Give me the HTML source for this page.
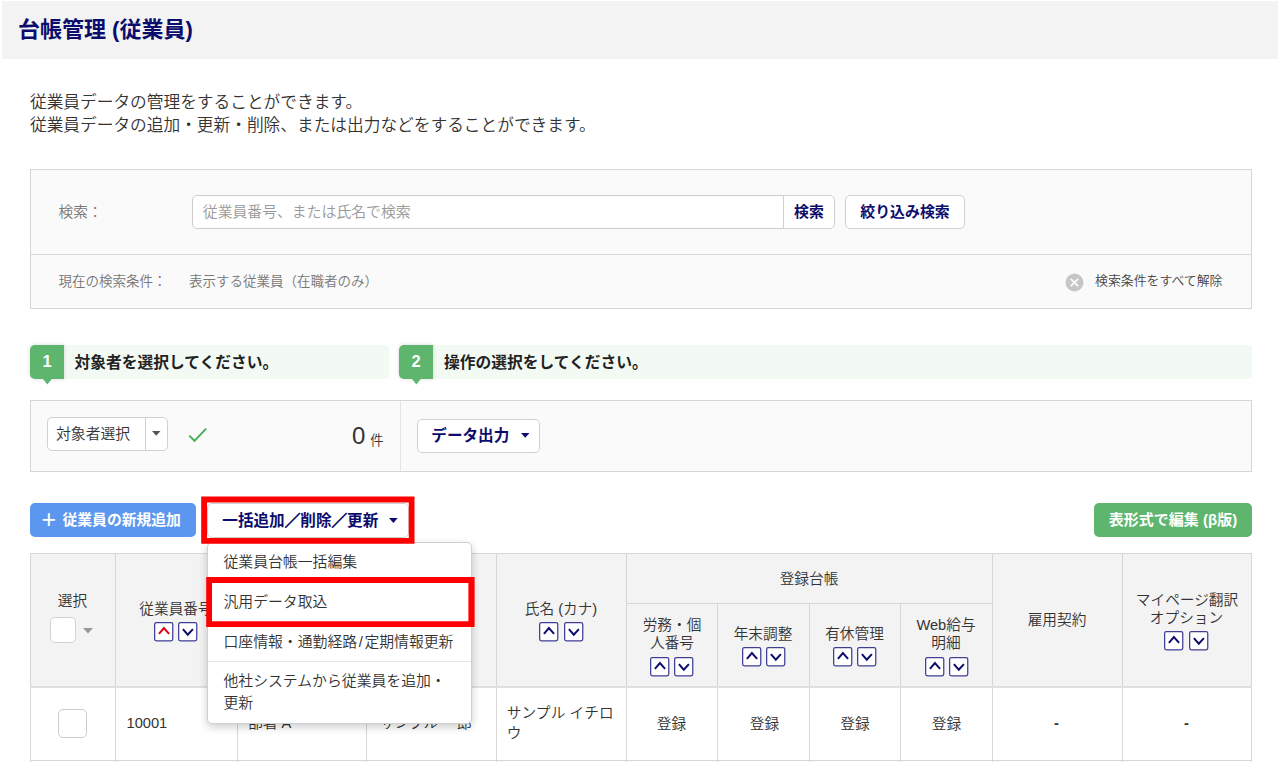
<!DOCTYPE html>
<html lang="ja">
<head>
<meta charset="utf-8">
<title>台帳管理 (従業員)</title>
<style>
*{box-sizing:border-box;margin:0;padding:0}
html,body{width:1280px;height:762px;overflow:hidden;background:#fff}
body{position:relative;font-family:"Liberation Sans","Noto Sans CJK JP",sans-serif;color:#333;font-size:14.67px;font-weight:350}
.abs{position:absolute;white-space:nowrap}
.hdr{left:2px;top:1px;width:1276px;height:58px;background:#f3f3f3}
.title{left:18px;top:15px;font-size:22px;font-weight:bold;color:#0c0c6c;line-height:30px}
.desc{left:30px;font-size:16.7px;color:#333;line-height:24px}
.sbox{left:30px;top:169px;width:1222px;height:140px;background:#fafafa;border:1px solid #d6d6d6}
.sdiv{left:31px;top:254px;width:1220px;height:1px;background:#d9d9d9}
.lbl{font-size:14.67px;color:#777}
.small{font-size:13.5px;color:#777}
.input{left:192px;top:195px;width:592px;height:34px;background:#fff;border:1px solid #ccc;border-radius:5px 0 0 5px;font-size:14.85px;color:#999;line-height:32px;padding-left:9.8px}
.btnw{background:#fff;border:1px solid #d0d0d0;border-radius:5px;font-weight:bold;color:#0c0c6c;font-size:14.9px;text-align:center}
.step{height:34px;background:#f3faf3;border-radius:4px}
.num{width:34px;height:34px;background:#5eb56e;border-radius:5px 0 0 5px;color:#fff;font-weight:bold;font-size:16.5px;text-align:center;line-height:32px;box-shadow:0 0 4px rgba(0,0,0,.15)}
.tri{width:0;height:0;border-left:5px solid transparent;border-right:5px solid transparent;border-top:6px solid #5eb56e}
.steptxt{font-size:15.75px;font-weight:bold;color:#222;line-height:34px;margin-top:1px}
.panel{left:30px;top:400px;width:1222px;height:72px;background:#fafafa;border:1px solid #d6d6d6}
.c{position:absolute;white-space:nowrap;font-size:14.67px;color:#333;line-height:20px;margin-top:.6px;transform:translate(-50%,-50%)}
.l{position:absolute;white-space:nowrap;font-size:14.67px;color:#333;line-height:20px;margin-top:.6px;transform:translate(0,-50%)}
.vl{position:absolute;width:1px;background:#d6d6d6}
.hl{position:absolute;height:1px;background:#d6d6d6}
.dd{left:207px;top:542px;width:265px;height:182px;background:#fff;border:1px solid #d0d0d0;border-radius:5px;box-shadow:0 3px 9px rgba(0,0,0,.2)}
.ddi{left:223.5px;font-size:14.85px;color:#333;line-height:22px}
.red{border:6px solid #fe0000}
.n{font-weight:400}
.sl{-webkit-text-stroke:.7px #0c0c6c}
.cb{position:absolute;background:#fff;border:1px solid #ccc;border-radius:5px}
</style>
</head>
<body>
<div class="abs hdr"></div>
<div class="abs title">台帳管理 (従業員)</div>
<div class="abs desc" style="top:90.5px">従業員データの管理をすることができます。</div>
<div class="abs desc" style="top:114px">従業員データの追加・更新・削除、または出力などをすることができます。</div>
<div class="abs sbox"></div>
<div class="abs sdiv"></div>
<div class="abs lbl" style="left:58.5px;top:202px;line-height:20px">検索：</div>
<div class="abs input">従業員番号、または氏名で検索</div>
<div class="abs btnw" style="left:783px;top:195px;width:52px;height:34px;line-height:32px;border-radius:0 5px 5px 0">検索</div>
<div class="abs btnw" style="left:845px;top:195px;width:120px;height:34px;line-height:32px">絞り込み検索</div>
<div class="abs small" style="left:58.5px;top:273px;line-height:18px">現在の検索条件：</div>
<div class="abs small" style="left:189px;top:273px;line-height:18px">表示する従業員（在職者のみ）</div>
<svg class="abs" style="left:1065px;top:272.5px" width="19" height="19" viewBox="0 0 19 19"><circle cx="9.5" cy="9.5" r="9" fill="#c6c6c6"/><path d="M6.3 6.3l6.4 6.4M12.7 6.3l-6.4 6.4" stroke="#fff" stroke-width="1.7" stroke-linecap="round"/></svg>
<div class="abs small" style="left:1095px;top:272px;line-height:18px;color:#444;font-size:12.9px">検索条件をすべて解除</div>
<div class="abs step" style="left:30px;top:345px;width:359px"></div>
<div class="abs num" style="left:30px;top:345px">1</div>
<svg class="abs" style="left:42.7px;top:379px" width="12" height="8" viewBox="0 0 12 8"><path d="M0 0h8.7l-4.35 5.6z" fill="#5eb56e"/></svg>
<div class="abs steptxt" style="left:74.5px;top:345px">対象者を選択してください。</div>
<div class="abs step" style="left:400px;top:345px;width:852px"></div>
<div class="abs num" style="left:399px;top:345px">2</div>
<svg class="abs" style="left:411.8px;top:379px" width="12" height="8" viewBox="0 0 12 8"><path d="M0 0h8.7l-4.35 5.6z" fill="#5eb56e"/></svg>
<div class="abs steptxt" style="left:444px;top:345px">操作の選択をしてください。</div>
<div class="abs panel"></div>
<div class="abs" style="left:400px;top:401px;width:1px;height:70px;background:#e4e4e4"></div>
<div class="abs" style="left:47px;top:417px;width:121px;height:34px;background:#fff;border:1px solid #d0d0d0;border-radius:5px"></div>
<div class="abs" style="left:145px;top:418px;width:1px;height:32px;background:#d0d0d0"></div>
<div class="abs" style="left:56px;top:424px;font-size:14.85px;color:#333;line-height:20px">対象者選択</div>
<svg class="abs" style="left:151.5px;top:430.5px" width="12" height="8" viewBox="0 0 12 8"><path d="M0 0h8.5l-4.25 4.8z" fill="#555"/></svg>
<svg class="abs" style="left:186px;top:425px" width="24" height="20" viewBox="0 0 24 20"><path d="M3.2 10.6l5.3 5.2L20.1 3.6" fill="none" stroke="#42af52" stroke-width="1.9"/></svg>
<div class="abs" style="left:352px;top:419px;font-size:24px;color:#333;line-height:34px;font-weight:400">0</div>
<div class="abs" style="left:370.3px;top:430.5px;font-size:13.3px;color:#333;line-height:20px">件</div>
<div class="abs btnw" style="left:417px;top:419px;width:123px;height:34px;line-height:32px;text-align:left;padding-left:13.3px;font-size:15.6px">データ出力</div>
<svg class="abs" style="left:521.3px;top:432.8px" width="12" height="8" viewBox="0 0 12 8"><path d="M0 0h8.5l-4.25 4.7z" fill="#0c0c6c"/></svg>
<div class="abs" style="left:30px;top:503px;width:166px;height:34px;background:#5b97ee;border-radius:5px;color:#fff;font-weight:bold;font-size:14.8px;line-height:34px"><span style="position:absolute;left:11.6px;top:-1px;font-size:25px;font-weight:normal">+</span><span style="position:absolute;left:32.5px;top:0">従業員の新規追加</span></div>
<div class="abs btnw" style="left:207px;top:503px;width:202px;height:35px;line-height:33px;text-align:left;padding-left:14.3px;font-size:15.6px">一括追加<span class="sl">／</span>削除<span class="sl">／</span>更新</div>
<svg class="abs" style="left:389.25px;top:517.5px" width="12" height="8" viewBox="0 0 12 8"><path d="M0 0h8.75l-4.375 5z" fill="#0c0c6c"/></svg>
<div class="abs" style="left:1094px;top:503px;width:158px;height:34px;background:#5eb56e;border-radius:5px;color:#fff;font-weight:bold;font-size:15px;line-height:34px;text-align:center">表形式で編集 (β版)</div>
<div class="abs" style="left:30px;top:553px;width:1222px;height:134px;background:#f3f3f3"></div>
<div class="vl" style="left:30px;top:553px;height:209px"></div>
<div class="vl" style="left:115px;top:553px;height:209px"></div>
<div class="vl" style="left:237px;top:553px;height:209px"></div>
<div class="vl" style="left:366px;top:553px;height:209px"></div>
<div class="vl" style="left:496px;top:553px;height:209px"></div>
<div class="vl" style="left:626px;top:553px;height:209px"></div>
<div class="vl" style="left:717px;top:603px;height:159px"></div>
<div class="vl" style="left:809px;top:603px;height:159px"></div>
<div class="vl" style="left:900px;top:603px;height:159px"></div>
<div class="vl" style="left:992px;top:553px;height:209px"></div>
<div class="vl" style="left:1122px;top:553px;height:209px"></div>
<div class="vl" style="left:1251px;top:553px;height:209px"></div>
<div class="hl" style="left:30px;top:553px;width:1222px"></div>
<div class="hl" style="left:626px;top:603px;width:366px"></div>
<div class="hl" style="left:30px;top:686px;width:1222px;height:2px;background:linear-gradient(#dcdcdc,#e2e2e2)"></div>
<div class="hl" style="left:30px;top:760px;width:1222px"></div>
<div class="c" style="left:72.5px;top:600.2px">選択</div>
<div class="cb" style="left:50px;top:617px;width:26px;height:26px;border-color:#d2d2d2"></div>
<svg class="abs" style="left:83px;top:628.4px" width="12" height="8" viewBox="0 0 12 8"><path d="M0 0h10l-5 5.5z" fill="#999"/></svg>
<div class="c" style="left:176px;top:608px">従業員番号</div>
<svg class="abs" style="left:154.37px;top:621.57px" width="21" height="21" viewBox="0 0 21 21"><rect x=".65" y=".65" width="18.1" height="18.1" rx="1.7" fill="#fff" stroke="#3e3e94" stroke-width="1.25"/><path d="M4.9 11.8L9.9 6.1l5.2 5.7" fill="none" stroke="#e00012" stroke-width="2"/></svg><svg class="abs" style="left:178.37px;top:621.57px" width="21" height="21" viewBox="0 0 21 21"><rect x=".65" y=".65" width="18.1" height="18.1" rx="1.7" fill="#fff" stroke="#3e3e94" stroke-width="1.25"/><path d="M4.9 7.1l4.9 5.6 5.1-5.6" fill="none" stroke="#0c0c6c" stroke-width="2"/></svg>
<div class="c" style="left:302px;top:608px">所属</div>
<svg class="abs" style="left:279.97px;top:621.57px" width="21" height="21" viewBox="0 0 21 21"><rect x=".65" y=".65" width="18.1" height="18.1" rx="1.7" fill="#fff" stroke="#3e3e94" stroke-width="1.25"/><path d="M4.9 11.8L9.9 6.1l5.2 5.7" fill="none" stroke="#0c0c6c" stroke-width="2"/></svg><svg class="abs" style="left:304.37px;top:621.57px" width="21" height="21" viewBox="0 0 21 21"><rect x=".65" y=".65" width="18.1" height="18.1" rx="1.7" fill="#fff" stroke="#3e3e94" stroke-width="1.25"/><path d="M4.9 7.1l4.9 5.6 5.1-5.6" fill="none" stroke="#0c0c6c" stroke-width="2"/></svg>
<div class="c" style="left:431px;top:608px">氏名</div>
<svg class="abs" style="left:409.47px;top:621.57px" width="21" height="21" viewBox="0 0 21 21"><rect x=".65" y=".65" width="18.1" height="18.1" rx="1.7" fill="#fff" stroke="#3e3e94" stroke-width="1.25"/><path d="M4.9 11.8L9.9 6.1l5.2 5.7" fill="none" stroke="#0c0c6c" stroke-width="2"/></svg><svg class="abs" style="left:433.87px;top:621.57px" width="21" height="21" viewBox="0 0 21 21"><rect x=".65" y=".65" width="18.1" height="18.1" rx="1.7" fill="#fff" stroke="#3e3e94" stroke-width="1.25"/><path d="M4.9 7.1l4.9 5.6 5.1-5.6" fill="none" stroke="#0c0c6c" stroke-width="2"/></svg>
<div class="c" style="left:561px;top:608.5px">氏名 <span class="n">(</span>カナ<span class="n">)</span></div>
<svg class="abs" style="left:539.07px;top:621.57px" width="21" height="21" viewBox="0 0 21 21"><rect x=".65" y=".65" width="18.1" height="18.1" rx="1.7" fill="#fff" stroke="#3e3e94" stroke-width="1.25"/><path d="M4.9 11.8L9.9 6.1l5.2 5.7" fill="none" stroke="#0c0c6c" stroke-width="2"/></svg><svg class="abs" style="left:563.87px;top:621.57px" width="21" height="21" viewBox="0 0 21 21"><rect x=".65" y=".65" width="18.1" height="18.1" rx="1.7" fill="#fff" stroke="#3e3e94" stroke-width="1.25"/><path d="M4.9 7.1l4.9 5.6 5.1-5.6" fill="none" stroke="#0c0c6c" stroke-width="2"/></svg>
<div class="c" style="left:809px;top:578px">登録台帳</div>
<div class="c" style="left:672px;top:624px">労務・個</div>
<div class="c" style="left:672px;top:642.5px">人番号</div>
<svg class="abs" style="left:649.77px;top:656.77px" width="21" height="21" viewBox="0 0 21 21"><rect x=".65" y=".65" width="18.1" height="18.1" rx="1.7" fill="#fff" stroke="#3e3e94" stroke-width="1.25"/><path d="M4.9 11.8L9.9 6.1l5.2 5.7" fill="none" stroke="#0c0c6c" stroke-width="2"/></svg><svg class="abs" style="left:674.27px;top:656.77px" width="21" height="21" viewBox="0 0 21 21"><rect x=".65" y=".65" width="18.1" height="18.1" rx="1.7" fill="#fff" stroke="#3e3e94" stroke-width="1.25"/><path d="M4.9 7.1l4.9 5.6 5.1-5.6" fill="none" stroke="#0c0c6c" stroke-width="2"/></svg>
<div class="c" style="left:763px;top:633px">年末調整</div>
<svg class="abs" style="left:741.87px;top:646.87px" width="21" height="21" viewBox="0 0 21 21"><rect x=".65" y=".65" width="18.1" height="18.1" rx="1.7" fill="#fff" stroke="#3e3e94" stroke-width="1.25"/><path d="M4.9 11.8L9.9 6.1l5.2 5.7" fill="none" stroke="#0c0c6c" stroke-width="2"/></svg><svg class="abs" style="left:765.77px;top:646.87px" width="21" height="21" viewBox="0 0 21 21"><rect x=".65" y=".65" width="18.1" height="18.1" rx="1.7" fill="#fff" stroke="#3e3e94" stroke-width="1.25"/><path d="M4.9 7.1l4.9 5.6 5.1-5.6" fill="none" stroke="#0c0c6c" stroke-width="2"/></svg>
<div class="c" style="left:854.5px;top:633px">有休管理</div>
<svg class="abs" style="left:832.97px;top:646.87px" width="21" height="21" viewBox="0 0 21 21"><rect x=".65" y=".65" width="18.1" height="18.1" rx="1.7" fill="#fff" stroke="#3e3e94" stroke-width="1.25"/><path d="M4.9 11.8L9.9 6.1l5.2 5.7" fill="none" stroke="#0c0c6c" stroke-width="2"/></svg><svg class="abs" style="left:857.07px;top:646.87px" width="21" height="21" viewBox="0 0 21 21"><rect x=".65" y=".65" width="18.1" height="18.1" rx="1.7" fill="#fff" stroke="#3e3e94" stroke-width="1.25"/><path d="M4.9 7.1l4.9 5.6 5.1-5.6" fill="none" stroke="#0c0c6c" stroke-width="2"/></svg>
<div class="c" style="left:946px;top:624px"><span class="n">Web</span>給与</div>
<div class="c" style="left:946px;top:642.5px">明細</div>
<svg class="abs" style="left:924.77px;top:656.77px" width="21" height="21" viewBox="0 0 21 21"><rect x=".65" y=".65" width="18.1" height="18.1" rx="1.7" fill="#fff" stroke="#3e3e94" stroke-width="1.25"/><path d="M4.9 11.8L9.9 6.1l5.2 5.7" fill="none" stroke="#0c0c6c" stroke-width="2"/></svg><svg class="abs" style="left:948.67px;top:656.77px" width="21" height="21" viewBox="0 0 21 21"><rect x=".65" y=".65" width="18.1" height="18.1" rx="1.7" fill="#fff" stroke="#3e3e94" stroke-width="1.25"/><path d="M4.9 7.1l4.9 5.6 5.1-5.6" fill="none" stroke="#0c0c6c" stroke-width="2"/></svg>
<div class="c" style="left:1057px;top:619.5px">雇用契約</div>
<div class="c" style="left:1187px;top:599px">マイページ翻訳</div>
<div class="c" style="left:1186.5px;top:617px">オプション</div>
<svg class="abs" style="left:1164.27px;top:630.87px" width="21" height="21" viewBox="0 0 21 21"><rect x=".65" y=".65" width="18.1" height="18.1" rx="1.7" fill="#fff" stroke="#3e3e94" stroke-width="1.25"/><path d="M4.9 11.8L9.9 6.1l5.2 5.7" fill="none" stroke="#0c0c6c" stroke-width="2"/></svg><svg class="abs" style="left:1189.17px;top:630.87px" width="21" height="21" viewBox="0 0 21 21"><rect x=".65" y=".65" width="18.1" height="18.1" rx="1.7" fill="#fff" stroke="#3e3e94" stroke-width="1.25"/><path d="M4.9 7.1l4.9 5.6 5.1-5.6" fill="none" stroke="#0c0c6c" stroke-width="2"/></svg>
<div class="cb" style="left:58px;top:709px;width:29px;height:29px"></div>
<div class="l" style="left:126.5px;top:722px"><span class="n">10001</span></div>
<div class="l" style="left:248px;top:722px">部署 <span class="n">A</span></div>
<div class="l" style="left:380px;top:722px">サンプル 一郎</div>
<div class="l" style="left:506.8px;top:712px;letter-spacing:.1px">サンプル イチロ</div>
<div class="l" style="left:506.8px;top:732px">ウ</div>
<div class="c" style="left:671.5px;top:723px">登録</div>
<div class="c" style="left:764.5px;top:723px">登録</div>
<div class="c" style="left:855px;top:723px">登録</div>
<div class="c" style="left:946.5px;top:723px">登録</div>
<div class="c" style="left:1056.5px;top:722.6px"><span class="n" style="font-weight:bold">-</span></div>
<div class="c" style="left:1186.5px;top:722.6px"><span class="n" style="font-weight:bold">-</span></div>
<div class="abs dd"></div>
<div class="abs ddi" style="top:550.5px">従業員台帳一括編集</div>
<div class="abs ddi" style="top:591px">汎用データ取込</div>
<div class="abs ddi" style="top:631px">口座情報・通勤経路<span class="n" style="padding:0 1.6px">/</span>定期情報更新</div>
<div class="abs" style="left:208px;top:661px;width:263px;height:1px;background:#e5e5e5"></div>
<div class="abs ddi" style="top:669.5px">他社システムから従業員を追加・</div>
<div class="abs ddi" style="top:692px">更新</div>
<svg class="abs" style="left:190px;top:490px" width="300" height="150" viewBox="190 490 300 150"><path fill="#fe0000" fill-rule="evenodd" d="M201.2 496.6H414.5V543.8H201.2zM207 502.4V538H408.8V502.4z"/><path fill="#fe0000" fill-rule="evenodd" d="M206.2 577.1H474.6V626.9H206.2zM212 583.1V621.2H468.4V583.1z"/></svg>
</body>
</html>
